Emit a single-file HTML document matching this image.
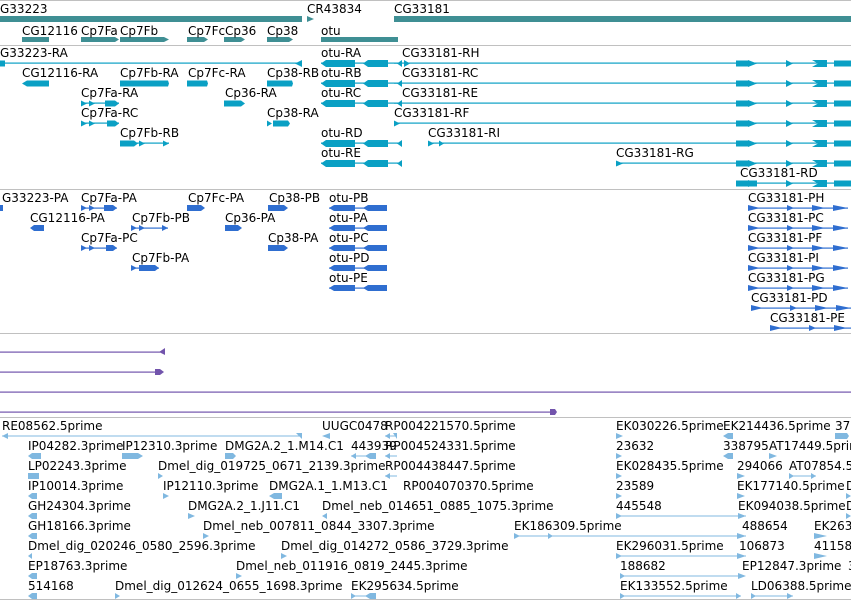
<!DOCTYPE html>
<html><head><meta charset="utf-8"><style>
html,body{margin:0;padding:0;background:#fff;width:851px;height:601px;overflow:hidden}
svg{display:block}
text{font-family:"DejaVu Sans","Liberation Sans",sans-serif;font-size:12px;fill:#000}
</style></head><body>
<svg width="851" height="601" viewBox="0 0 851 601" xmlns="http://www.w3.org/2000/svg">
<defs>
<!-- otu transcript pattern (origin at x=0 of row center) -->
<g id="otuT" fill="#0aa0c4">
<rect x="321" y="62.5" width="80" height="1.2"/>
<polygon points="321,63.5 326,60 355,60 355,67 326,67"/>
<polygon points="363,63.5 368,60 388,60 388,67 368,67"/>
<polygon points="397,63.5 402,60 402,67"/>
</g>
<g id="cgT" fill="#0aa0c4">
<rect x="736" y="60.5" width="12" height="6"/>
<polygon points="748,60 757,63.5 748,67"/>
<polygon points="786,60 793,63.5 786,67"/>
<polygon points="812,60 827,60 827,67 812,67 818,63.5"/>
<rect x="834" y="60.5" width="17" height="6"/>
</g>
<g id="otuP" fill="#2f6ed0">
<rect x="329" y="207.5" width="58" height="1.2"/>
<polygon points="329,208 334,205 355,205 355,211 334,211"/>
<polygon points="363,208 368,205 387,205 387,211 368,211"/>
</g>
<g id="cgP" fill="#2f6ed0">
<rect x="748" y="207.5" width="100" height="1.2"/>
<polygon points="748,205 760,208 748,211"/>
<polygon points="787,205 794,208 787,211"/>
<polygon points="812,205 825,208 812,211"/>
<polygon points="833,205 848,208 833,211"/>
</g>
</defs>

<!-- separators -->
<g fill="#c0c0c0">
<rect x="0" y="0" width="851" height="1"/>
<rect x="0" y="45" width="851" height="1"/>
<rect x="0" y="189" width="851" height="1"/>
<rect x="0" y="333" width="851" height="1"/>
<rect x="0" y="417" width="851" height="1"/>
<rect x="0" y="599" width="851" height="1"/>
</g>

<!-- gene track -->
<text x="0" y="13">G33223</text>
<text x="307" y="13">CR43834</text>
<text x="394" y="13">CG33181</text>
<g fill="#3f8f94">
<rect x="0" y="16" width="302" height="6"/>
<polygon points="307,16 314,19 307,22"/>
<rect x="394" y="16" width="457" height="6"/>
<rect x="22" y="37" width="27" height="5"/>
<polygon points="81,37 115,37 119,39.5 115,42 81,42"/>
<polygon points="120,37 164,37 169,39.5 164,42 120,42"/>
<polygon points="187,37 204,37 208,39.5 204,42 187,42"/>
<polygon points="224,37 241,37 245,39.5 241,42 224,42"/>
<polygon points="267,37 289,37 293,39.5 289,42 267,42"/>
<rect x="321" y="37" width="77" height="5"/>
</g>
<text x="22" y="35">CG12116</text>
<text x="81" y="35">Cp7Fa</text>
<text x="120" y="35">Cp7Fb</text>
<text x="188" y="35">Cp7Fc</text>
<text x="225" y="35">Cp36</text>
<text x="267" y="35">Cp38</text>
<text x="321" y="35">otu</text>

<!-- transcript track -->
<g fill="#0aa0c4">
<rect x="0" y="62.5" width="302" height="1.2"/>
<rect x="0" y="60.5" width="5" height="6"/>
<polygon points="302,60 295,63.5 302,67"/>
<rect x="394" y="62.5" width="457" height="1.2"/>
<polygon points="404,60 410,63.5 404,67"/>
<!-- row1 -->
<polygon points="22,83.5 27,80.5 49,80.5 49,86.5 27,86.5"/>
<polygon points="120,80.5 168,80.5 169,83.5 168,86.5 120,86.5"/>
<polygon points="187,80.5 207,80.5 208,83.5 207,86.5 187,86.5"/>
<polygon points="267,80.5 292,80.5 293,83.5 292,86.5 267,86.5"/>
<rect x="394" y="82.5" width="457" height="1.2"/>
<!-- row2 -->
<rect x="81" y="102.5" width="38" height="1.2"/>
<polygon points="81,100.5 87,103.5 81,106.5"/><polygon points="89,100.5 95,103.5 89,106.5"/>
<polygon points="105,100.5 115,100.5 119,103.5 115,106.5 105,106.5"/>
<polygon points="224,100.5 241,100.5 245,103.5 241,106.5 224,106.5"/>
<rect x="394" y="102.5" width="457" height="1.2"/>
<!-- row3 -->
<rect x="81" y="122.5" width="38" height="1.2"/>
<polygon points="81,120.5 87,123.5 81,126.5"/><polygon points="89,120.5 95,123.5 89,126.5"/>
<polygon points="107,120.5 115,120.5 119,123.5 115,126.5 107,126.5"/>
<polygon points="267,120.5 272,123.5 267,126.5"/>
<polygon points="273,120.5 288,120.5 290,123.5 288,126.5 273,126.5"/>
<rect x="394" y="122.5" width="457" height="1.2"/>
<polygon points="394,120.5 400,123.5 394,126.5"/>
<!-- row4 -->
<polygon points="120,140.5 134,140.5 138,143.5 134,146.5 120,146.5"/>
<rect x="120" y="142.5" width="49" height="1.2"/>
<polygon points="139,140.5 145,143.5 139,146.5"/><polygon points="163,140.5 169,143.5 163,146.5"/>
<rect x="428" y="142.5" width="423" height="1.2"/>
<polygon points="428,140.5 434,143.5 428,146.5"/><polygon points="439,140.5 444,143.5 439,146.5"/>
<!-- row5 -->
<rect x="616" y="162.5" width="235" height="1.2"/>
<polygon points="616,160.5 623,163.5 616,166.5"/>
<!-- row6 -->
<rect x="740" y="182.5" width="111" height="1.2"/>
<rect x="740" y="180.5" width="17" height="6"/>
</g>
<use href="#otuT"/><use href="#otuT" y="20"/><use href="#otuT" y="40"/><use href="#otuT" y="80"/><use href="#otuT" y="100"/>
<use href="#cgT"/><use href="#cgT" y="20"/><use href="#cgT" y="40"/><use href="#cgT" y="60"/><use href="#cgT" y="80"/><use href="#cgT" y="100"/><use href="#cgT" y="120"/>
<text x="0" y="57">G33223-RA</text><text x="321" y="57">otu-RA</text><text x="402" y="57">CG33181-RH</text>
<text x="22" y="77">CG12116-RA</text><text x="120" y="77">Cp7Fb-RA</text><text x="188" y="77">Cp7Fc-RA</text><text x="267" y="77">Cp38-RB</text><text x="321" y="77">otu-RB</text><text x="402" y="77">CG33181-RC</text>
<text x="81" y="97">Cp7Fa-RA</text><text x="225" y="97">Cp36-RA</text><text x="321" y="97">otu-RC</text><text x="402" y="97">CG33181-RE</text>
<text x="81" y="117">Cp7Fa-RC</text><text x="267" y="117">Cp38-RA</text><text x="394" y="117">CG33181-RF</text>
<text x="120" y="137">Cp7Fb-RB</text><text x="321" y="137">otu-RD</text><text x="428" y="137">CG33181-RI</text>
<text x="321" y="157">otu-RE</text><text x="616" y="157">CG33181-RG</text>
<text x="740" y="177">CG33181-RD</text>

<!-- protein track -->
<g fill="#2f6ed0">
<rect x="0" y="205" width="3" height="6"/>
<rect x="81" y="207.5" width="36" height="1.2"/>
<polygon points="81,205 87,208 81,211"/><polygon points="89,205 95,208 89,211"/>
<polygon points="104,205 113,205 117,208 113,211 104,211"/>
<polygon points="187,205 201,205 205,208 201,211 187,211"/>
<polygon points="268,205 284,205 288,208 284,211 268,211"/>
<polygon points="30,228 34,225 44,225 44,231 34,231"/>
<rect x="131" y="227.5" width="37" height="1.2"/>
<polygon points="131,225 137,228 131,231"/><polygon points="139,225 145,228 139,231"/><polygon points="162,225 168,228 162,231"/>
<polygon points="225,225 238,225 242,228 238,231 225,231"/>
<rect x="81" y="247.5" width="36" height="1.2"/>
<polygon points="81,245 87,248 81,251"/><polygon points="89,245 95,248 89,251"/>
<polygon points="106,245 113,245 117,248 113,251 106,251"/>
<polygon points="268,245 284,245 288,248 284,251 268,251"/>
<rect x="131" y="267.5" width="28" height="1.2"/>
<polygon points="131,265 137,268 131,271"/>
<polygon points="139,265 155,265 159,268 155,271 139,271"/>
</g>
<use href="#otuP"/><use href="#otuP" y="20"/><use href="#otuP" y="40"/><use href="#otuP" y="60"/><use href="#otuP" y="80"/>
<use href="#cgP"/><use href="#cgP" y="20"/><use href="#cgP" y="40"/><use href="#cgP" y="60"/><use href="#cgP" y="80"/>
<use href="#cgP" x="3" y="100"/><use href="#cgP" x="22" y="120"/>
<rect x="0" y="0" width="0" height="0"/>
<text x="2" y="202">G33223-PA</text><text x="81" y="202">Cp7Fa-PA</text><text x="188" y="202">Cp7Fc-PA</text><text x="269" y="202">Cp38-PB</text><text x="329" y="202">otu-PB</text><text x="748" y="202">CG33181-PH</text>
<text x="30" y="222">CG12116-PA</text><text x="132" y="222">Cp7Fb-PB</text><text x="225" y="222">Cp36-PA</text><text x="329" y="222">otu-PA</text><text x="748" y="222">CG33181-PC</text>
<text x="81" y="242">Cp7Fa-PC</text><text x="268" y="242">Cp38-PA</text><text x="329" y="242">otu-PC</text><text x="748" y="242">CG33181-PF</text>
<text x="132" y="262">Cp7Fb-PA</text><text x="329" y="262">otu-PD</text><text x="748" y="262">CG33181-PI</text>
<text x="329" y="282">otu-PE</text><text x="748" y="282">CG33181-PG</text>
<text x="751" y="302">CG33181-PD</text>
<text x="770" y="322">CG33181-PE</text>

<!-- purple -->
<g fill="#7254ac">
<rect x="0" y="351.5" width="160" height="1.2"/>
<polygon points="159,352 165,348 165,355"/>
<rect x="0" y="371.5" width="160" height="1.2"/>
<polygon points="155,369 160,369 164,372 160,375 155,375"/>
<rect x="0" y="391.5" width="851" height="1.2"/>
<rect x="0" y="411.5" width="552" height="1.2"/>
<polygon points="550,409 555,409 557,412 555,415 550,415"/>
</g>

<!-- EST track -->
<g fill="#80b8e0">
<rect x="2" y="435.5" width="300" height="1"/>
<polygon points="2,436 8,433 8,439"/><polygon points="296,433 302,433 302,439"/>
<polygon points="322,436 330,433 330,439"/>
<rect x="385" y="435.5" width="12" height="1"/><polygon points="385,436 390,433 390,439"/><polygon points="393,433 397,433 397,439"/>
<polygon points="616,433 623,436 616,439"/>
<polygon points="723,436 728,433 733,433 733,439 728,439"/>
<polygon points="835,433 847,433 849,436 847,439 835,439"/>
<!-- r1 -->
<polygon points="28,456 32,453 41,453 41,459 32,459"/>
<polygon points="122,453 138,453 143,456 138,459 122,459"/>
<polygon points="225,453 233,453 236,456 233,459 225,459"/>
<rect x="351" y="455.5" width="25" height="1"/><polygon points="351,456 356,453 356,459"/><polygon points="365,456 370,453 376,453 376,459 370,459"/>
<rect x="385" y="455.5" width="12" height="1"/><polygon points="385,456 390,453 390,459"/>
<polygon points="616,453 622,456 616,459"/>
<polygon points="723,456 728,453 733,453 733,459 728,459"/>
<polygon points="769,453 777,456 769,459"/>
<!-- r2 -->
<rect x="28" y="473" width="11" height="6"/>
<polygon points="158,473 163,476 158,479"/>
<rect x="385" y="475.5" width="12" height="1"/><polygon points="385,476 390,473 390,479"/>
<polygon points="616,473 622,476 616,479"/>
<polygon points="737,473 745,476 737,479"/>
<rect x="789" y="475.5" width="27" height="1"/><polygon points="789,473 794,476 789,479"/><polygon points="811,473 816,476 811,479"/>
<!-- r3 -->
<polygon points="28,496 32,493 37,493 37,499 32,499"/>
<polygon points="163,493 169,496 163,499"/>
<polygon points="269,496 274,493 282,493 282,499 274,499"/>
<polygon points="616,493 622,496 616,499"/>
<polygon points="737,493 745,496 737,499"/>
<polygon points="846,493 851,496 846,499"/>
<!-- r4 -->
<polygon points="28,516 32,513 37,513 37,519 32,519"/>
<polygon points="188,513 195,516 188,519"/>
<polygon points="322,516 327,513 327,519"/>
<rect x="616" y="515.5" width="130" height="1"/><polygon points="616,513 622,516 616,519"/><polygon points="738,513 746,516 738,519"/>
<polygon points="846,513 851,516 846,519"/>
<!-- r5 -->
<polygon points="28,536 32,533 37,533 37,539 32,539"/>
<polygon points="203,533 209,536 203,539"/>
<rect x="514" y="535.5" width="232" height="1"/><polygon points="514,533 520,536 514,539"/><polygon points="548,533 553,536 548,539"/><polygon points="737,533 746,536 737,539"/>
<polygon points="814,533 827,536 814,539"/>
<!-- r6 -->
<polygon points="28,556 32,553 32,559"/>
<polygon points="281,553 287,556 281,559"/>
<rect x="616" y="555.5" width="130" height="1"/><polygon points="616,553 622,556 616,559"/><polygon points="737,553 746,556 737,559"/>
<polygon points="814,553 827,556 814,559"/>
<!-- r7 -->
<polygon points="28,576 32,573 37,573 37,579 32,579"/>
<polygon points="236,573 242,576 236,579"/>
<rect x="620" y="575.5" width="120" height="1"/><polygon points="620,573 625,576 620,579"/><polygon points="738,573 746,576 738,579"/>
<!-- r8 -->
<polygon points="28,596 32,593 37,593 37,599 32,599"/>
<polygon points="115,593 120,596 115,599"/>
<rect x="351" y="595.5" width="25" height="1"/><polygon points="351,593 356,596 351,599"/><polygon points="365,596 370,593 376,593 376,599 370,599"/>
<rect x="620" y="595.5" width="121" height="1"/><polygon points="620,593 625,596 620,599"/><polygon points="736,593 741,596 736,599"/>
<rect x="751" y="595.5" width="42" height="1"/><polygon points="751,593 756,596 751,599"/><polygon points="787,593 793,596 787,599"/>
</g>
<text x="2" y="430">RE08562.5prime</text><text x="322" y="430">UUGC0478</text><text x="385" y="430">RP004221570.5prime</text><text x="616" y="430">EK030226.5prime</text><text x="723" y="430">EK214436.5prime</text><text x="835" y="430">37</text>
<text x="28" y="450">IP04282.3prime</text><text x="122" y="450">IP12310.3prime</text><text x="225" y="450">DMG2A.2_1.M14.C1</text><text x="351" y="450">443939</text><text x="385" y="450">RP004524331.5prime</text><text x="616" y="450">23632</text><text x="723" y="450">338795</text><text x="769" y="450">AT17449.5prime</text>
<text x="28" y="470">LP02243.3prime</text><text x="158" y="470">Dmel_dig_019725_0671_2139.3prime</text><text x="385" y="470">RP004438447.5prime</text><text x="616" y="470">EK028435.5prime</text><text x="737" y="470">294066</text><text x="789" y="470">AT07854.5prime</text>
<text x="28" y="490">IP10014.3prime</text><text x="163" y="490">IP12110.3prime</text><text x="269" y="490">DMG2A.1_1.M13.C1</text><text x="403" y="490">RP004070370.5prime</text><text x="616" y="490">23589</text><text x="737" y="490">EK177140.5prime</text><text x="846" y="490">D</text>
<text x="28" y="510">GH24304.3prime</text><text x="188" y="510">DMG2A.2_1.J11.C1</text><text x="322" y="510">Dmel_neb_014651_0885_1075.3prime</text><text x="616" y="510">445548</text><text x="738" y="510">EK094038.5prime</text><text x="846" y="510">D</text>
<text x="28" y="530">GH18166.3prime</text><text x="203" y="530">Dmel_neb_007811_0844_3307.3prime</text><text x="514" y="530">EK186309.5prime</text><text x="742" y="530">488654</text><text x="814" y="530">EK263</text>
<text x="28" y="550">Dmel_dig_020246_0580_2596.3prime</text><text x="281" y="550">Dmel_dig_014272_0586_3729.3prime</text><text x="616" y="550">EK296031.5prime</text><text x="739" y="550">106873</text><text x="814" y="550">41158</text>
<text x="28" y="570">EP18763.3prime</text><text x="236" y="570">Dmel_neb_011916_0819_2445.3prime</text><text x="620" y="570">188682</text><text x="742" y="570">EP12847.3prime</text><text x="848" y="570">3</text>
<text x="28" y="590">514168</text><text x="115" y="590">Dmel_dig_012624_0655_1698.3prime</text><text x="351" y="590">EK295634.5prime</text><text x="620" y="590">EK133552.5prime</text><text x="751" y="590">LD06388.5prime</text>
</svg>
</body></html>
